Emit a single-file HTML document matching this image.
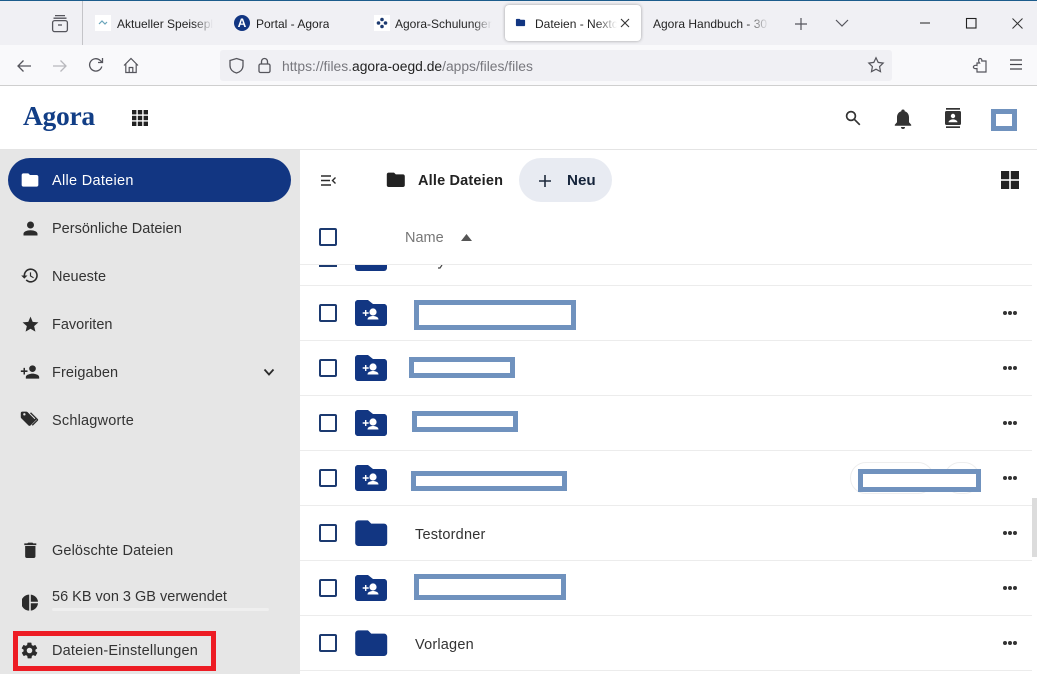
<!DOCTYPE html>
<html lang="de"><head><meta charset="utf-8"><title>Dateien</title>
<style>
html,body{margin:0;padding:0;width:1037px;height:674px;overflow:hidden;background:#fff}
body{position:relative;font-family:"Liberation Sans",sans-serif;color:#222}
.a{position:absolute}
.t{position:absolute;white-space:nowrap;line-height:20px;height:20px}
.tab{font-size:12px;color:#222;top:14px;overflow:hidden}
.nav{font-size:14.5px;color:#333;left:52px}
.cb{position:absolute;left:319px;width:14px;height:14px;border:2px solid #1c3a70;border-radius:2px;background:#fff}
.line{position:absolute;left:300px;width:732px;height:1px;background:#ececec}
.red{position:absolute;box-sizing:border-box;border:5px solid #7092be;background:#fff}
.dots{position:absolute;left:1003px;width:14px;height:4px}
.dots i{position:absolute;top:0;width:4px;height:4px;border-radius:50%;background:#333}
.dots i:nth-child(1){left:0}.dots i:nth-child(2){left:5px}.dots i:nth-child(3){left:10px}
svg{position:absolute;display:block}
.fade{background-clip:text;-webkit-background-clip:text;color:transparent}
</style></head><body>
<svg width="0" height="0" style="position:absolute"><defs>
<symbol id="folder" viewBox="0 0 24 24"><path d="M10 4H4c-1.100 0-2 .9-2 2v12c0 1.100.9 2 2 2h16c1.100 0 2-.9 2-2V8c0-1.100-.9-2-2-2h-8l-2-2z"/></symbol>
<symbol id="share" viewBox="0 0 32 26"><path fill="#123682" d="M3 0h10l5 4H29c1.700 0 3 1.300 3 3v16c0 1.700-1.300 3-3 3H3c-1.700 0-3-1.300-3-3V3c0-1.700 1.300-3 3-3z"/><circle cx="18" cy="12" r="3.600" fill="#fff"/><path fill="#fff" d="M12.500 19.500c0-2.500 3-3.500 5.500-3.500s5.500 1 5.500 3.500zM10 12.300V10h1.400v2.300h2.300v1.400h-2.300V16H10v-2.300H7.700v-1.400z"/></symbol>
</defs></svg>

<!-- tab strip -->
<div class="a" style="left:0;top:0;width:1037px;height:45px;background:#f0f0f4"></div>
<div class="a" style="left:0;top:0;width:1037px;height:1px;background:#1c5c8c"></div>
<div class="a" style="left:82px;top:1px;width:1px;height:44px;background:#c4c4c8"></div>
<svg style="left:51px;top:14px" width="18" height="19" viewBox="0 0 18 19" fill="none" stroke="#55555c" stroke-width="1.300"><path d="M4 1.600h10M2.500 4.200h13"/><rect x="1.600" y="6.600" width="14.800" height="11" rx="2"/><path d="M7 11h4"/></svg>

<div class="a" style="left:95px;top:15px;width:16px;height:16px;background:#fff"></div>
<svg style="left:97px;top:18px" width="12" height="10" viewBox="0 0 12 10" fill="none" stroke="#6aa5bb" stroke-width="1.200"><path d="M2 6l3-3 3 3 2-2"/></svg>
<div class="t tab fade" style="left:117px;width:96px;background-image:linear-gradient(90deg,#222 80%,#f0f0f4)">Aktueller Speiseplan</div>
<div class="a" style="left:234px;top:15px;width:16px;height:16px;border-radius:50%;background:#123682;color:#fff;font:bold 12px/16px 'Liberation Sans',sans-serif;text-align:center">A</div>
<div class="t tab" style="left:256px">Portal - Agora</div>
<div class="a" style="left:374px;top:15px;width:16px;height:16px;background:#fff"></div>
<svg style="left:376px;top:17px" width="12" height="12" viewBox="0 0 12 12" fill="#1c3a70"><circle cx="6" cy="2.500" r="1.800"/><circle cx="2.500" cy="6" r="1.800"/><circle cx="9.500" cy="6" r="1.800"/><circle cx="6" cy="9.500" r="1.800"/></svg>
<div class="t tab fade" style="left:395px;width:97px;background-image:linear-gradient(90deg,#222 80%,#f0f0f4)">Agora-Schulungen</div>

<div class="a" style="left:505px;top:5px;width:136px;height:36px;background:#fff;border-radius:4px;box-shadow:0 0 3px rgba(0,0,0,.35)"></div>
<svg style="left:515px;top:17px;fill:#123682" width="11" height="11"><use href="#folder" width="11" height="11"/></svg>
<div class="t tab fade" style="left:535px;width:82px;background-image:linear-gradient(90deg,#222 75%,#fff)">Dateien - Nextcloud</div>
<svg style="left:619px;top:17px" width="12" height="12" viewBox="0 0 12 12" stroke="#333" stroke-width="1.100"><path d="M2 2l8 8M10 2l-8 8"/></svg>
<div class="t tab fade" style="left:653px;width:116px;background-image:linear-gradient(90deg,#222 80%,#f0f0f4)">Agora Handbuch - 30</div>
<svg style="left:794px;top:17px" width="14" height="14" viewBox="0 0 14 14" stroke="#55555c" stroke-width="1.200"><path d="M7 1v12M1 7h12"/></svg>
<svg style="left:835px;top:18px" width="14" height="10" viewBox="0 0 14 10" fill="none" stroke="#55555c" stroke-width="1.200"><path d="M1 2l6 6 6-6"/></svg>
<svg style="left:920px;top:17px" width="12" height="12" viewBox="0 0 12 12" stroke="#333" stroke-width="1.100"><path d="M0 6h10"/></svg>
<svg style="left:965px;top:17px" width="12" height="12" viewBox="0 0 12 12" fill="none" stroke="#222" stroke-width="1.100"><rect x="1.500" y="1.500" width="9.500" height="9.500"/></svg>
<svg style="left:1011px;top:17px" width="13" height="13" viewBox="0 0 13 13" stroke="#333" stroke-width="1"><path d="M1.500 1.500l10 10M11.500 1.500l-10 10"/></svg>

<!-- toolbar -->
<div class="a" style="left:0;top:45px;width:1037px;height:40px;background:#f9f9fb"></div>
<div class="a" style="left:0;top:85px;width:1037px;height:1px;background:#cfcfcf"></div>
<svg style="left:16px;top:58px" width="16" height="16" viewBox="0 0 16 16" fill="none" stroke="#55555c" stroke-width="1.300"><path d="M15 8H2M7.500 2.500L2 8l5.500 5.500"/></svg>
<svg style="left:52px;top:58px" width="16" height="16" viewBox="0 0 16 16" fill="none" stroke="#b8b8bd" stroke-width="1.300"><path d="M1 8h13M8.500 2.500L14 8l-5.500 5.500"/></svg>
<svg style="left:88px;top:57px" width="16" height="16" viewBox="0 0 16 16" fill="none" stroke="#55555c" stroke-width="1.300"><path d="M13.800 9.500A6.200 6.200 0 1 1 12 3.300L14.500 5.500M14.500 1v4.500H10"/></svg>
<svg style="left:123px;top:57px" width="16" height="17" viewBox="0 0 16 17" fill="none" stroke="#55555c" stroke-width="1.200"><path d="M1 8.500L8 1.500l7 7M2.800 7v8.500h10.400V7M6.200 15.500V10.500h3.600v5"/></svg>
<div class="a" style="left:220px;top:50px;width:672px;height:31px;background:#f0f0f4;border-radius:3px"></div>
<svg style="left:228px;top:57px" width="17" height="17" viewBox="0 0 17 17" fill="none" stroke="#55555c" stroke-width="1.300"><path d="M8.500 1.500l6.500 2v5c0 4-3 6.500-6.500 7.500C5 15 2 12.500 2 8.500v-5z"/></svg>
<svg style="left:257px;top:57px" width="15" height="17" viewBox="0 0 15 17" fill="none" stroke="#55555c" stroke-width="1.300"><rect x="2" y="7" width="11" height="8.500" rx="1.500"/><path d="M4.500 7V4.500a3 3 0 0 1 6 0V7"/></svg>
<div class="t" style="left:282px;top:56px;font-size:13.850px;color:#77777d">https://files.<span style="color:#222">agora-oegd.de</span>/apps/files/files</div>
<svg style="left:867px;top:56px" width="18" height="18" viewBox="0 0 18 18" fill="none" stroke="#55555c" stroke-width="1.200"><path d="M9 1.800l2.200 4.600 5 .7-3.600 3.500.9 5L9 13.200l-4.500 2.400.9-5L1.800 7.100l5-.7z"/></svg>
<svg style="left:972px;top:57px" width="16" height="17" viewBox="0 0 16 17" fill="none" stroke="#55555c" stroke-width="1.200"><path d="M8 1.500c1.500 0 2 1 1.800 2.500H14v11H5v-3.500C2.500 12 1 11 1.500 9.500 2 8.500 3.500 8 5 8.500V6h2.500C6 4 6.500 1.500 8 1.500z"/></svg>
<svg style="left:1009px;top:58px" width="14" height="13" viewBox="0 0 14 13" stroke="#44444a" stroke-width="1.300"><path d="M1 2h12M1 6.500h12M1 11h12"/></svg>

<!-- app header -->
<div class="a" style="left:0;top:149px;width:1037px;height:1px;background:#e4e4e4"></div>
<div class="t" style="left:23px;top:100px;height:32px;font:bold 27.500px/32px 'Liberation Serif',serif;color:#123e86;letter-spacing:-.3px">Agora</div>
<svg style="left:132px;top:110px" width="16" height="16" viewBox="0 0 16 16" fill="#222"><rect width="4.400" height="4.400"/><rect x="5.800" width="4.400" height="4.400"/><rect x="11.600" width="4.400" height="4.400"/><rect y="5.800" width="4.400" height="4.400"/><rect x="5.800" y="5.800" width="4.400" height="4.400"/><rect x="11.600" y="5.800" width="4.400" height="4.400"/><rect y="11.600" width="4.400" height="4.400"/><rect x="5.800" y="11.600" width="4.400" height="4.400"/><rect x="11.600" y="11.600" width="4.400" height="4.400"/></svg>
<svg style="left:845px;top:110px" width="16" height="16" viewBox="0 0 16 16" fill="none" stroke="#333" stroke-width="1.700"><circle cx="6" cy="6" r="4.400"/><path d="M9.300 9.300l5.500 5.500"/></svg>
<svg style="left:893px;top:108px" width="20" height="22" viewBox="0 0 20 22" fill="#333"><path d="M10 1.500a1.700 1.700 0 0 1 1.700 1.700c2.800.8 4.300 3.200 4.300 6v5l2.200 2.500v1H1.800v-1L4 14.200v-5c0-2.800 1.500-5.200 4.300-6A1.700 1.700 0 0 1 10 1.500zM8 19h4a2 2 0 0 1-4 0z"/></svg>
<svg style="left:945px;top:108px" width="16" height="20" viewBox="0 0 16 20" fill="#333"><rect x="1" y="0" width="14" height="1.700"/><rect x="1" y="18.300" width="14" height="1.700"/><rect x="0" y="3" width="16" height="14" rx="1.500"/><circle cx="8" cy="8" r="2.200" fill="#fff"/><path fill="#fff" d="M3.500 14.300c0-2 3-2.900 4.500-2.900s4.500.9 4.500 2.900z"/></svg>
<div class="red" style="left:991px;top:109px;width:26px;height:22px"></div>

<!-- sidebar -->
<div class="a" style="left:0;top:150px;width:300px;height:524px;background:#e6e6e6"></div>
<div class="a" style="left:8px;top:158px;width:283px;height:44px;border-radius:22px;background:#123682"></div>
<svg style="left:20px;top:170px;fill:#fff" width="20" height="20"><use href="#folder" width="20" height="20"/></svg>
<div class="t nav" style="top:171px;color:#fff;letter-spacing:.3px">Alle Dateien</div>

<svg style="left:19.500px;top:217.500px" width="21" height="21" viewBox="0 0 24 24" fill="#2b2b2b"><path d="M12 4a4 4 0 1 1 0 8 4 4 0 0 1 0-8zm0 10c4.400 0 8 1.800 8 4v2H4v-2c0-2.200 3.600-4 8-4z"/></svg>
<div class="t nav" style="top:219px">Persönliche Dateien</div>

<svg style="left:20px;top:266px" width="19" height="19" viewBox="0 0 24 24" fill="#2b2b2b"><path d="M13.500 3a9 9 0 0 0-9 9H1.500l3.900 3.900.1.100 4-4h-3a7 7 0 1 1 2.050 4.950L7.130 18.370A9 9 0 1 0 13.500 3zM12.500 8v5l4.300 2.500.7-1.200-3.500-2.100V8z"/></svg>
<div class="t nav" style="top:267px">Neueste</div>

<svg style="left:20.500px;top:315px" width="19" height="19" viewBox="0 0 24 24" fill="#2b2b2b"><path d="M12 17.300l6.200 3.700-1.600-7 5.400-4.700-7.200-.6L12 2 9.200 8.700 2 9.300 7.400 14l-1.600 7z"/></svg>
<div class="t nav" style="top:315px">Favoriten</div>

<svg style="left:20px;top:362px" width="20" height="20" viewBox="0 0 24 24" fill="#2b2b2b"><path d="M15 4a4 4 0 1 1 0 8 4 4 0 0 1 0-8zM6 10V7H4.200v3H1v2h3.200v3H6v-3h3v-2zm9 4c-2.700 0-8 1.300-8 4v2h16v-2c0-2.700-5.300-4-8-4z"/></svg>
<div class="t nav" style="top:363px;letter-spacing:.1px">Freigaben</div>
<svg style="left:263px;top:368px" width="12" height="9" viewBox="0 0 12 9" fill="none" stroke="#2b2b2b" stroke-width="1.800"><path d="M1.500 1.500L6 6.500l4.500-5"/></svg>

<svg style="left:20px;top:410px" width="19" height="19" viewBox="0 0 24 24" fill="#2b2b2b"><path d="M5.500 7A1.500 1.500 0 1 1 5.500 4a1.500 1.500 0 0 1 0 3zm12.900 4.600l-9-9C9 2.200 8.500 2 8 2H3a2 2 0 0 0-2 2v5c0 .5.200 1 .6 1.400l9 9c.4.400.9.600 1.400.6s1-.2 1.400-.6l7-7c.4-.4.600-.9.600-1.400s-.200-1-.600-1.400z"/><path d="M14 3l8.600 8.600c.5.500.5 1.300 0 1.800l-6.500 6.500-1.200-1.200 6.400-6.300L12.500 4z"/></svg>
<div class="t nav" style="top:411px;letter-spacing:.2px">Schlagworte</div>

<svg style="left:19.700px;top:539.500px" width="20.600" height="20.600" viewBox="0 0 24 24" fill="#2b2b2b"><path d="M6 19a2 2 0 0 0 2 2h8a2 2 0 0 0 2-2V7H6zM19 4h-3.500l-1-1h-5l-1 1H5v2h14z"/></svg>
<div class="t nav" style="top:541px;letter-spacing:.12px">Gelöschte Dateien</div>

<svg style="left:22px;top:594px" width="16" height="17" viewBox="0 0 16 17" fill="#2b2b2b"><path d="M7.200.600v16A8 8 0 0 1 7.200.600zM8.800.600A8 8 0 0 1 16 7.700H8.800zM8.800 9.300H16a8 8 0 0 1-7.200 7.300z"/></svg>
<div class="t nav" style="top:587px">56 KB von 3 GB verwendet</div>
<div class="a" style="left:52px;top:608px;width:217px;height:3px;background:#efefef;border-radius:2px"></div>

<div class="a" style="left:13px;top:631px;border:5px solid #ed1c24;width:193px;height:30px"></div>
<svg style="left:20px;top:641px" width="19" height="19" viewBox="0 0 24 24" fill="#2b2b2b"><path d="M19.400 13c0-.3.100-.6.100-1s0-.7-.1-1l2.100-1.600c.2-.2.200-.4.100-.6l-2-3.500c-.1-.2-.4-.3-.6-.2l-2.500 1c-.5-.4-1.100-.7-1.700-1l-.4-2.600c0-.3-.2-.5-.5-.5h-4c-.3 0-.5.200-.5.500l-.4 2.600c-.6.300-1.200.6-1.700 1l-2.500-1c-.2-.1-.5 0-.6.200l-2 3.500c-.1.200-.1.500.1.600L4.600 11c0 .3-.1.700-.1 1s0 .7.100 1l-2.100 1.600c-.2.200-.2.400-.1.600l2 3.500c.1.200.4.300.6.200l2.500-1c.5.400 1.100.7 1.700 1l.4 2.600c0 .3.200.5.500.5h4c.3 0 .5-.2.500-.5l.4-2.600c.6-.3 1.200-.6 1.700-1l2.500 1c.2.100.5 0 .6-.2l2-3.500c.1-.2.100-.5-.1-.6zM12 15.500a3.500 3.500 0 1 1 0-7 3.500 3.500 0 0 1 0 7z"/></svg>
<div class="t nav" style="top:641px;letter-spacing:.2px">Dateien-Einstellungen</div>

<!-- files header -->
<svg style="left:321px;top:175px" width="15" height="11" viewBox="0 0 15 11" fill="none" stroke="#2b2b2b" stroke-width="1.400"><path d="M0 1h10M0 5.500h9M0 10h10M14.500 2.500l-3 3 3 3"/></svg>
<svg style="left:385.200px;top:169.400px;fill:#222" width="21.600" height="21.600"><use href="#folder" width="21.600" height="21.600"/></svg>
<div class="t" style="left:418px;top:171px;font-size:14.500px;font-weight:bold;color:#222;letter-spacing:.18px">Alle Dateien</div>
<div class="a" style="left:519px;top:158px;width:93px;height:44px;border-radius:22px;background:#e8ebf2"></div>
<svg style="left:538px;top:174px" width="14" height="14" viewBox="0 0 14 14" stroke="#1e2a3c" stroke-width="1.600"><path d="M7 1v12M1 7h12"/></svg>
<div class="t" style="left:567px;top:171px;font-size:15.200px;font-weight:bold;color:#14233a">Neu</div>
<svg style="left:1001px;top:171px" width="18" height="18" viewBox="0 0 18 18" fill="#222"><rect width="8.200" height="8.200"/><rect x="9.800" width="8.200" height="8.200"/><rect y="9.800" width="8.200" height="8.200"/><rect x="9.800" y="9.800" width="8.200" height="8.200"/></svg>
<div class="cb" style="top:228px"></div>
<div class="t" style="left:405px;top:228px;font-size:14.500px;color:#777">Name</div>
<svg style="left:461px;top:234px" width="11" height="7" viewBox="0 0 11 7" fill="#555"><path d="M5.500 0l5.500 7H0z"/></svg>

<!-- partial row -->
<div class="a" style="left:319px;top:265px;width:18px;height:2px;background:#1c3a70"></div>
<div class="a" style="left:355px;top:265px;width:32px;height:6px;background:#123682;border-radius:0 0 3px 3px"></div>
<svg style="left:435px;top:265px" width="8" height="4" viewBox="0 0 8 4" fill="none" stroke="#444" stroke-width="1.200"><path d="M7 0L5 3H3"/></svg>
<div class="line" style="top:264px"></div>
<div class="line" style="top:285px"></div>
<div class="line" style="top:340px"></div>
<div class="line" style="top:395px"></div>
<div class="line" style="top:450px"></div>
<div class="line" style="top:505px"></div>
<div class="line" style="top:560px"></div>
<div class="line" style="top:615px"></div>
<div class="line" style="top:670px"></div>

<!-- rows -->
<div class="cb" style="top:304px"></div><svg style="left:355px;top:300px" width="32" height="26"><use href="#share"/></svg><div class="red" style="left:414px;top:300px;width:162px;height:30px"></div><div class="dots" style="top:311px"><i></i><i></i><i></i></div>
<div class="cb" style="top:359px"></div><svg style="left:355px;top:355px" width="32" height="26"><use href="#share"/></svg><div class="red" style="left:409px;top:357px;width:106px;height:21px"></div><div class="dots" style="top:366px"><i></i><i></i><i></i></div>
<div class="cb" style="top:414px"></div><svg style="left:355px;top:410px" width="32" height="26"><use href="#share"/></svg><div class="red" style="left:412px;top:411px;width:106px;height:21px"></div><div class="dots" style="top:421px"><i></i><i></i><i></i></div>
<div class="cb" style="top:469px"></div><svg style="left:355px;top:465px" width="32" height="26"><use href="#share"/></svg><div class="red" style="left:411px;top:471px;width:156px;height:20px"></div>
<div class="a" style="left:850px;top:462px;width:84px;height:32px;border:1px solid #eee;border-radius:17px;box-sizing:border-box"></div>
<div class="a" style="left:944px;top:462px;width:36px;height:32px;border:1px solid #eee;border-radius:17px;box-sizing:border-box"></div>
<div class="red" style="left:858px;top:469px;width:123px;height:23px"></div><div class="dots" style="top:476px"><i></i><i></i><i></i></div>
<div class="cb" style="top:524px"></div><svg style="left:352px;top:514px;fill:#123682" width="38.400" height="38.400"><use href="#folder" width="38.400" height="38.400"/></svg><div class="t" style="left:415px;top:525px;font-size:14.500px;color:#333;letter-spacing:.2px">Testordner</div><div class="dots" style="top:531px"><i></i><i></i><i></i></div>
<div class="cb" style="top:579px"></div><svg style="left:355px;top:575px" width="32" height="26"><use href="#share"/></svg><div class="red" style="left:414px;top:574px;width:152px;height:26px"></div><div class="dots" style="top:586px"><i></i><i></i><i></i></div>
<div class="cb" style="top:634px"></div><svg style="left:352px;top:624px;fill:#123682" width="38.400" height="38.400"><use href="#folder" width="38.400" height="38.400"/></svg><div class="t" style="left:415px;top:635px;font-size:14.500px;color:#333;letter-spacing:.2px">Vorlagen</div><div class="dots" style="top:641px"><i></i><i></i><i></i></div>

<!-- scrollbar -->
<div class="a" style="left:1032px;top:498px;width:5px;height:59px;background:#dcdcdc"></div>
</body></html>
